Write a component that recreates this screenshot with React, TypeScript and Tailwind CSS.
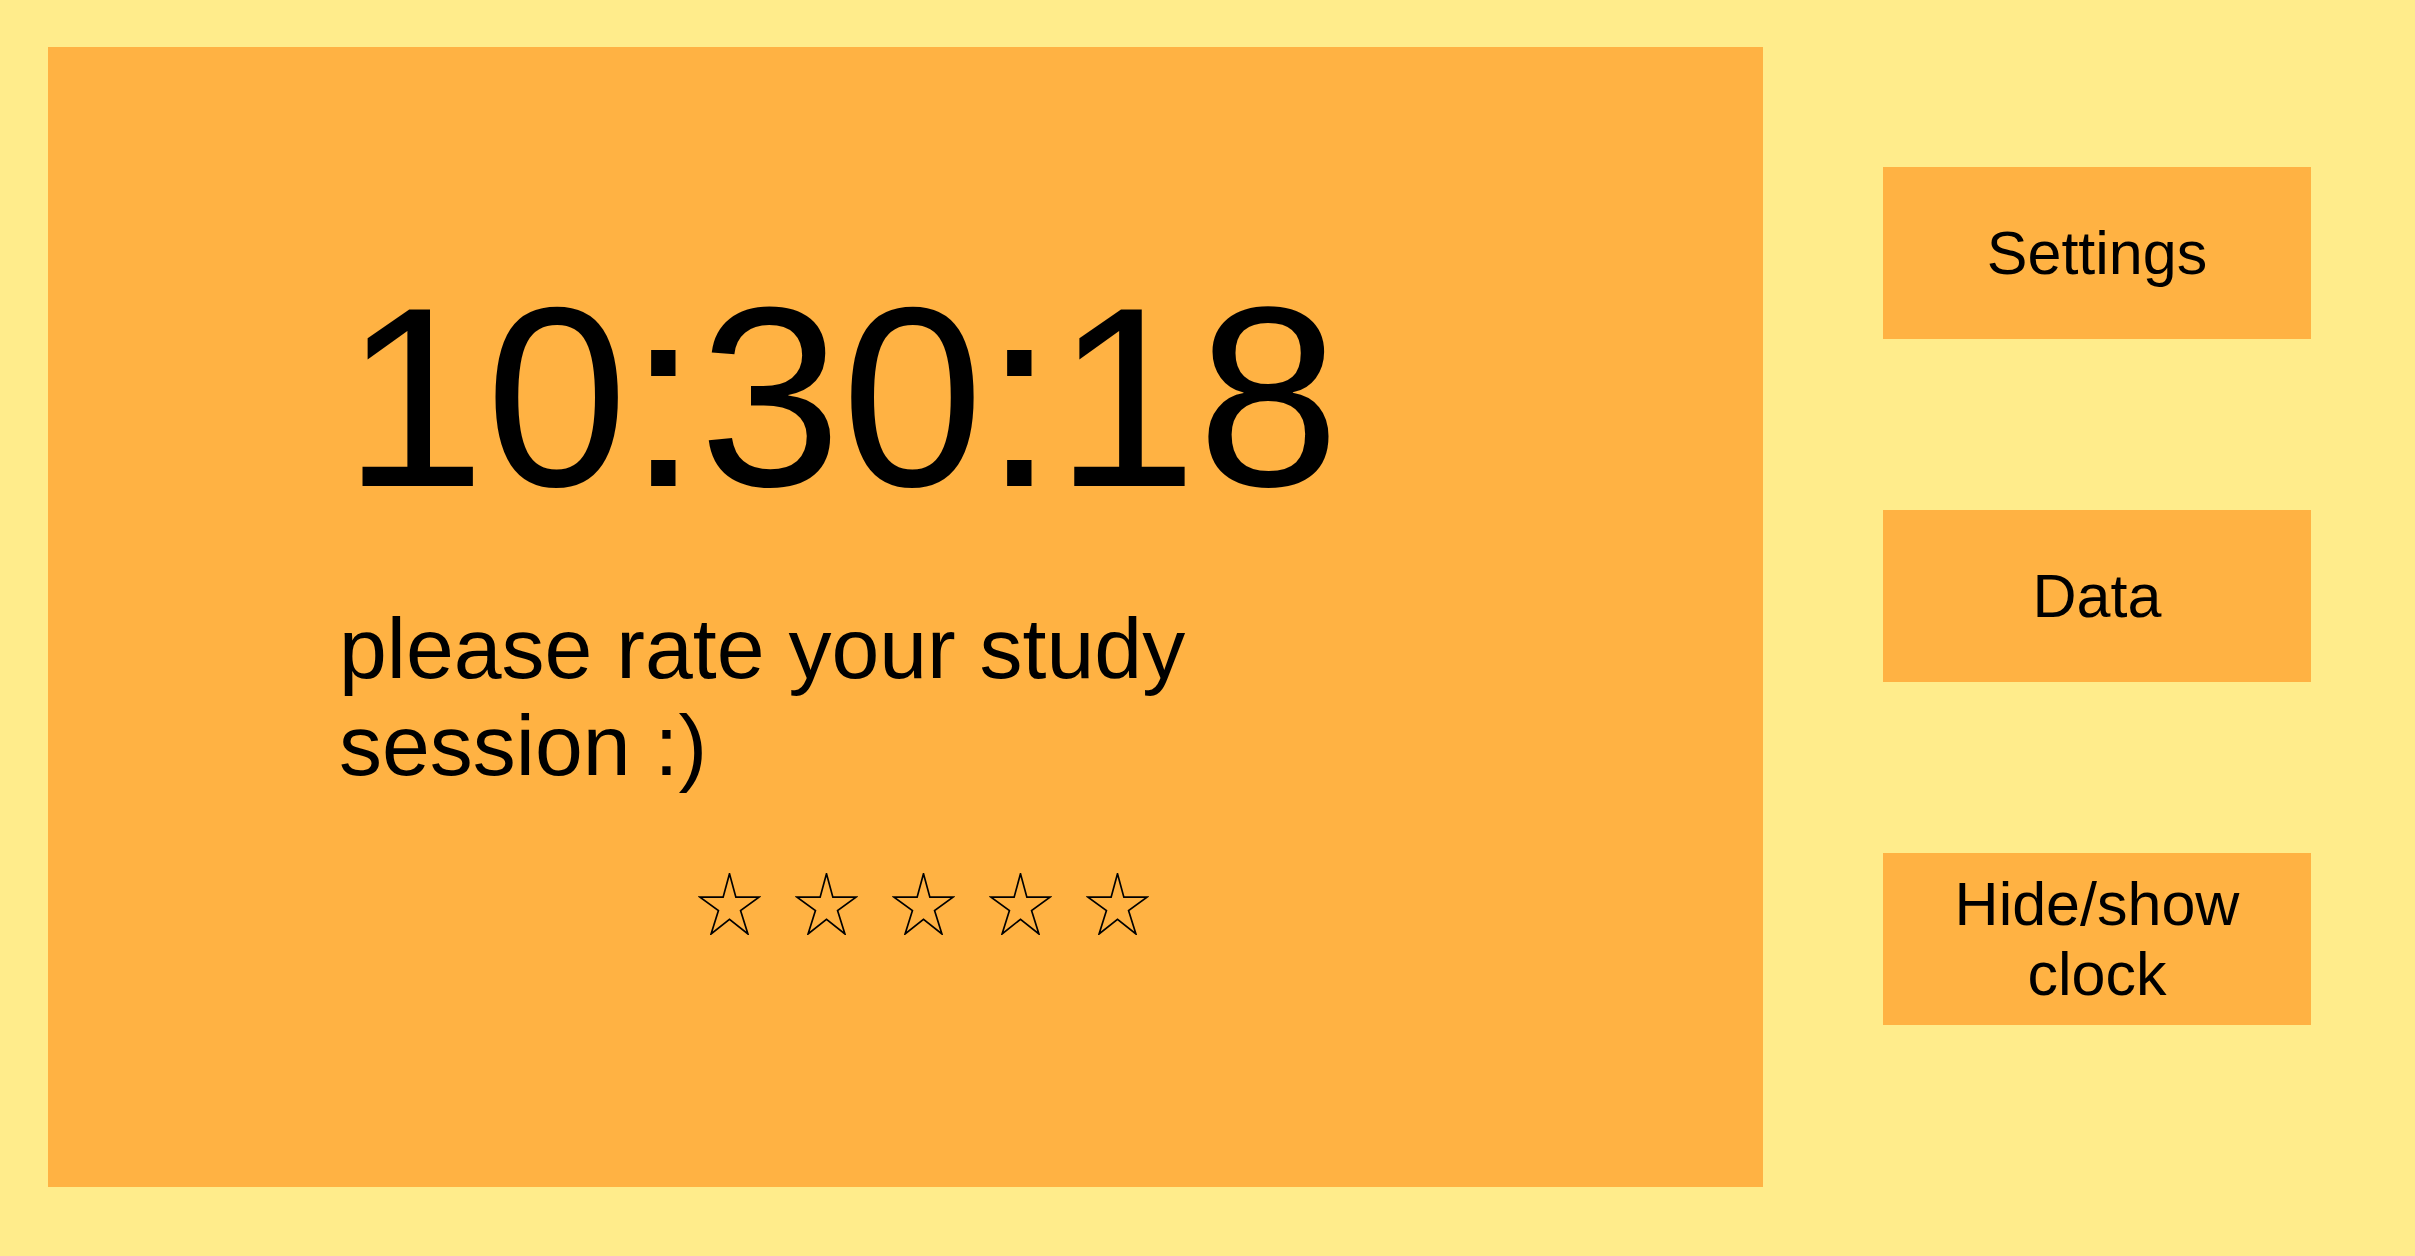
import React from "react"

const font = { fontFamily: '"Liberation Sans", Arial, sans-serif' }

const Star = () => (
  <svg width="63" height="62" viewBox="0 0 180 185" className="block">
    <polygon
      points="90,2 109,72 178,72 123,112 145,182 90,138 35,182 57,112 2,72 71,72"
      fill="none"
      stroke="black"
      strokeWidth="5"
    />
  </svg>
)

const SideButton = ({ label }: { label: string }) => (
  <button className="flex h-[172px] w-[428px] items-center justify-center bg-[#ffb243] px-6 text-center text-[61px] leading-[70px] text-black">
    {label}
  </button>
)

export default function App() {
  return (
    <div
      className="flex h-screen w-full gap-[120px] overflow-hidden bg-[#ffec8b] pl-[48px] pt-[47px]"
      style={font}
    >
      <div className="h-[1140px] w-[1715px] shrink-0 bg-[#ffb243] pl-[291px] pt-[222px]">
        <div className="ml-[4px] text-[256px] leading-[256px] text-black">10:30:18</div>
        <div className="mt-[75px] w-[1000px] text-[86px] leading-[97px] text-black">
          please rate your study session :)
        </div>
        <div className="ml-[359px] mt-[79px] flex gap-[34px]">
          <Star />
          <Star />
          <Star />
          <Star />
          <Star />
        </div>
      </div>
      <div className="flex w-[428px] shrink-0 flex-col gap-[171px] pt-[120px]">
        <SideButton label="Settings" />
        <SideButton label="Data" />
        <SideButton label="Hide/show clock" />
      </div>
    </div>
  )
}
